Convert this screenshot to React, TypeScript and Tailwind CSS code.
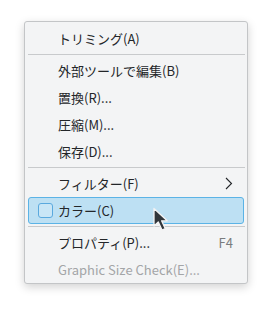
type Entry =
  | { kind: 'item'; label: string; shortcut?: string; submenu?: boolean; checkbox?: boolean; active?: boolean; disabled?: boolean }
  | { kind: 'sep' }

const entries: Entry[] = [
  { kind: 'item', label: 'トリミング(A)' },
  { kind: 'sep' },
  { kind: 'item', label: '外部ツールで編集(B)' },
  { kind: 'item', label: '置換(R)...' },
  { kind: 'item', label: '圧縮(M)...' },
  { kind: 'item', label: '保存(D)...' },
  { kind: 'sep' },
  { kind: 'item', label: 'フィルター(F)', submenu: true },
  { kind: 'item', label: 'カラー(C)', checkbox: true, active: true },
  { kind: 'sep' },
  { kind: 'item', label: 'プロパティ(P)...', shortcut: 'F4' },
  { kind: 'item', label: 'Graphic Size Check(E)...', disabled: true },
]

function Cursor() {
  return (
    <svg className="absolute left-[152px] top-[207px]" width="18" height="25" viewBox="0 0 18 25">
      <path
        d="M2 1.5 L2 19 L6.3 15 L10 23 L13.2 21.6 L9.6 13.8 L15.2 13.8 Z"
        fill="#31363b"
        stroke="#f4f4f4"
        strokeWidth="1.3"
        strokeLinejoin="round"
      />
    </svg>
  )
}

function Chevron() {
  return (
    <svg width="8" height="13" viewBox="0 0 8 13" className="text-[#232629]">
      <path d="M1 1 L6.5 6.5 L1 12" fill="none" stroke="currentColor" strokeWidth="1.1" />
    </svg>
  )
}

export default function App() {
  return (
    <div
      className="relative w-[273px] h-[312px] bg-white pl-[24px] pt-[21px]"
      style={{ fontFamily: '"Noto Sans CJK JP", "Noto Sans", sans-serif' }}
    >
      <div className="w-[224px] rounded-[3px] border border-[#c3c5c7] bg-[#f3f4f5] pt-[3px] shadow-[0_3px_10px_rgba(0,0,0,0.18)]">
        {entries.map((e, i) =>
          e.kind === 'sep' ? (
            <div key={i} className="h-[5px] flex items-center pl-[3px] pr-[2px]">
              <div className="h-px w-full bg-[#c8cacc]" />
            </div>
          ) : (
            <div key={i} className="h-[27px] px-[3px]">
              <div
                className={`h-full flex items-center rounded-[3px] border text-[13px] pr-[10px] ${
                  e.active ? 'border-[#5bb3e6] bg-[#bde0f3]' : 'border-transparent'
                } ${e.disabled ? 'text-[#a3a5a7]' : 'text-[#232629]'}`}
              >
                <div className="w-[29px] flex justify-end pr-[5px]">
                  {e.checkbox && (
                    <div className="w-[15px] h-[15px] rounded-[3px] border border-[#5aa9de] bg-[#c9e6f6]" />
                  )}
                </div>
                <span className="flex-1 leading-none">{e.label}</span>
                {e.shortcut && <span className="text-[#7a7c7e] leading-none">{e.shortcut}</span>}
                {e.submenu && <Chevron />}
              </div>
            </div>
          )
        )}
      </div>
      <Cursor />
    </div>
  )
}
